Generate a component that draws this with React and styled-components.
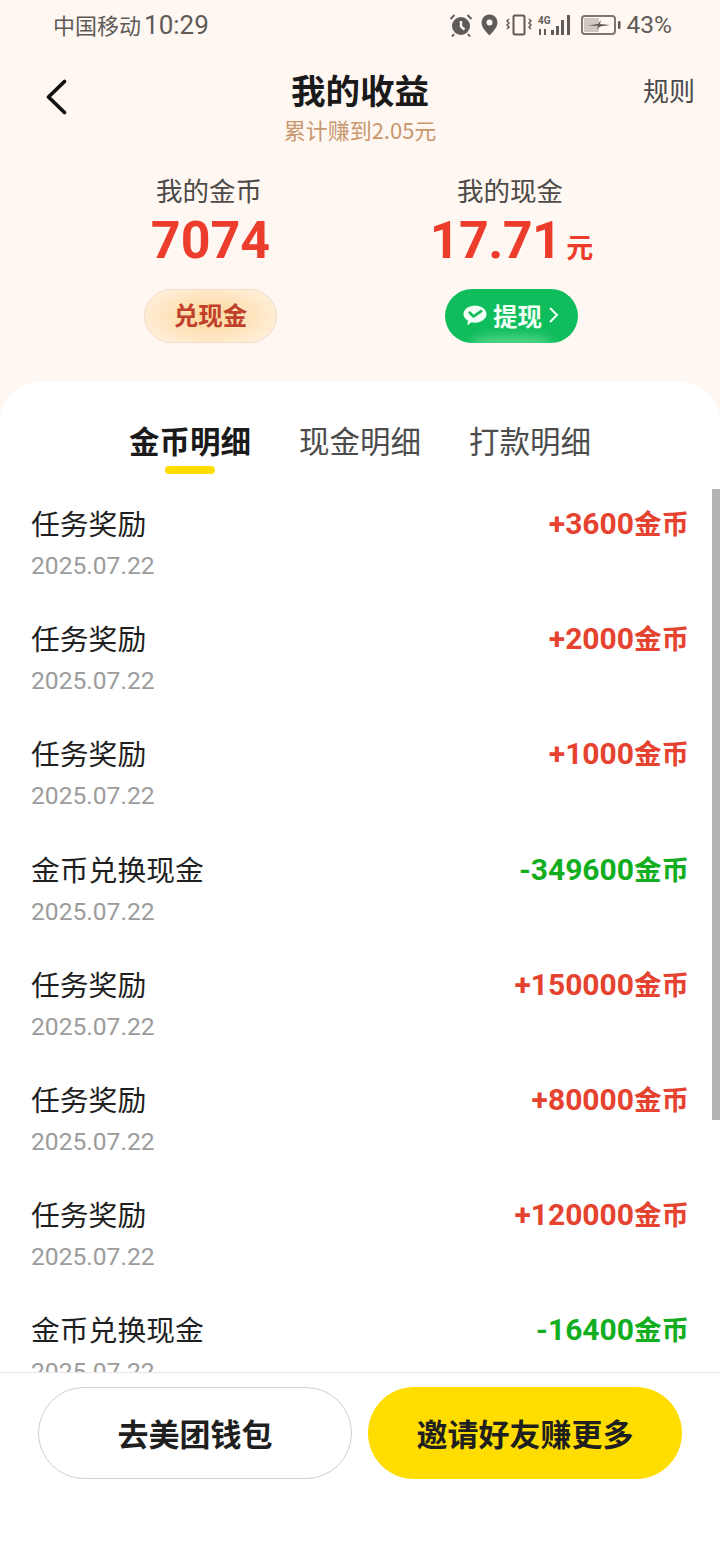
import React from "react";
import styled, { createGlobalStyle } from "styled-components";

const CJK = `"Noto Sans CJK SC", sans-serif`;
const NUM = `Roboto, "Noto Sans CJK SC", sans-serif`;

const Global = createGlobalStyle`
  html, body { margin: 0; padding: 0; background: #fff; }
  * { box-sizing: border-box; }
`;

const Page = styled.div`
  position: relative;
  width: 720px;
  height: 1560px;
  display: flex;
  flex-direction: column;
  overflow: hidden;
  background: #fff7f2;
  font-family: ${CJK};
`;

const StatusBar = styled.div`
  height: 50px;
  padding: 0 48px 0 53px;
  display: flex;
  align-items: center;
  justify-content: space-between;
  color: #5f5b58;
`;
const Carrier = styled.span`
  font-size: 22px;
  line-height: 30px;
  margin: 0 3px 3px 0;
`;
const Time = styled.span`
  font-family: ${NUM};
  font-size: 26px;
  line-height: 30px;
`;
const StatusLeft = styled.div`
  display: flex;
  align-items: center;
`;
const StatusRight = styled.div`
  display: flex;
  align-items: center;
`;
const Percent = styled.span`
  font-family: ${NUM};
  font-size: 24.5px;
  line-height: 30px;
  margin-left: 6px;
`;

const Nav = styled.div`
  display: grid;
  grid-template-columns: 1fr auto 1fr;
  padding: 16px 25px 0;
  height: 122px;
`;
const BackButton = styled.div`
  height: 48px;
  margin: 7px 0 0 20px;
  display: flex;
  align-items: center;
`;
const TitleBlock = styled.div`
  display: flex;
  flex-direction: column;
  align-items: center;
`;
const Title = styled.div`
  font-size: 34.5px;
  line-height: 46px;
  font-weight: 700;
  color: #1a1a1a;
`;
const Subtitle = styled.div`
  font-size: 22px;
  line-height: 30px;
  margin-top: 2px;
  color: #c9986f;
`;
const Rule = styled.div`
  justify-self: end;
  font-size: 26px;
  line-height: 46px;
  margin-top: 1px;
  color: #4a4a4a;
`;

const Stats = styled.div`
  display: grid;
  grid-template-columns: 301px 301px;
  padding-left: 60px;
  height: 210px;
`;
const Stat = styled.div`
  display: flex;
  flex-direction: column;
  align-items: center;
`;
const StatLabel = styled.div`
  font-size: 26.5px;
  line-height: 36px;
  margin-right: 3px;
  color: #4d4a48;
`;
const StatValue = styled.div`
  display: flex;
  align-items: baseline;
  height: 62px;
  margin-top: 2px;
  font-family: ${NUM};
  font-size: 52px;
  line-height: 62px;
  font-weight: 700;
  letter-spacing: ${(p) => (p.$tight ? "-0.6px" : "0")};
  color: #ec3c2c;
`;
const Unit = styled.span`
  font-family: ${CJK};
  font-size: 27px;
  font-weight: 700;
  letter-spacing: 0;
  margin-left: 5px;
`;
const Pill = styled.div`
  margin-top: 17px;
  width: 133px;
  height: 54px;
  border-radius: 27px;
  display: flex;
  align-items: center;
  justify-content: center;
  padding-bottom: 3px;
  font-size: 24.5px;
  font-weight: 700;
`;
const GoldPill = styled(Pill)`
  color: #c0402a;
  border: 1px solid #f1dcc8;
  background: radial-gradient(ellipse 60% 70% at 50% 50%, #fdd79d 0%, #fee6c2 60%, #fff1e1 100%);
`;
const GreenPill = styled(Pill)`
  position: relative;
  overflow: hidden;
  color: #f1fff6;
  gap: 6px;
  padding-bottom: 2px;
  background: #10bd5c;
  &::after {
    content: "";
    position: absolute;
    left: 25px;
    right: 25px;
    bottom: -8px;
    height: 16px;
    border-radius: 50%;
    background: rgba(150, 240, 180, 0.45);
    filter: blur(5px);
  }
`;

const Sheet = styled.div`
  flex: 1;
  min-height: 0;
  position: relative;
  display: flex;
  flex-direction: column;
  background: #fff;
  border-radius: 40px 40px 0 0;
`;
const Tabs = styled.div`
  display: flex;
  justify-content: center;
  gap: 48px;
  height: 107px;
  padding: 35px 0 0;
`;
const Tab = styled.div`
  position: relative;
  height: 46px;
  font-size: 30.5px;
  line-height: 46px;
  font-weight: ${(p) => (p.$active ? 700 : 400)};
  color: ${(p) => (p.$active ? "#1a1a1a" : "#4d4d4d")};
  ${(p) =>
    p.$active &&
    `&::after {
      content: "";
      position: absolute;
      left: 36px;
      bottom: -11px;
      width: 50px;
      height: 8px;
      border-radius: 4px;
      background: #ffdd00;
    }`}
`;
const List = styled.div`
  flex: 1;
  min-height: 0;
  overflow: hidden;
`;
const Scrollbar = styled.div`
  position: absolute;
  right: 0;
  top: 107px;
  width: 8px;
  height: 631px;
  background: #b4b4b4;
`;
const Row = styled.div`
  height: 115.2px;
  padding: 14px 31px 0 31px;
  display: flex;
  justify-content: space-between;
  align-items: flex-start;
`;
const RowMain = styled.div`
  display: flex;
  flex-direction: column;
`;
const RowTitle = styled.div`
  font-size: 28.8px;
  line-height: 40px;
  color: #1f1f1f;
`;
const RowDate = styled.div`
  font-family: ${NUM};
  font-size: 24.6px;
  line-height: 36px;
  margin: 5px 0 0 0;
  color: #9c9c9c;
`;
const Amount = styled.div`
  font-family: ${NUM};
  font-size: 30px;
  line-height: 40px;
  margin-top: -1px;
  font-weight: 700;
  color: ${(p) => (p.$negative ? "#12ae1f" : "#e5432f")};
`;
const AmountUnit = styled.span`
  font-family: ${CJK};
  font-size: 27.5px;
`;

const Footer = styled.div`
  height: 188px;
  flex: none;
  background: #fff;
  border-top: 1px solid #e6e6e6;
  padding: 14px 38px 0;
  display: flex;
  gap: 16px;
`;
const FooterButton = styled.div`
  flex: 0 0 314px;
  height: 92px;
  border-radius: 46px;
  display: flex;
  align-items: center;
  justify-content: center;
  padding-bottom: 2px;
  font-size: 31px;
  font-weight: 700;
  color: #1f1f1f;
  background: ${(p) => (p.$primary ? "#ffdd00" : "#fff")};
  border: ${(p) => (p.$primary ? "none" : "1px solid #d0d0d0")};
`;

const IconSlot = styled.svg`
  display: block;
  flex: none;
  margin-left: ${(p) => p.$gap || 0}px;
`;

const Alarm = () => (
  <IconSlot width="24" height="24" viewBox="0 0 24 24" fill="none">
    <circle cx="12" cy="13" r="9" fill="#5f5b58" />
    <path d="M12 8v5.500l3.500 3" stroke="#fff7f2" strokeWidth="2.400" />
    <path d="M1.500 6l4-4M22.500 6l-4-4M5 21l-2 2.500M19 21l2 2.500" stroke="#5f5b58" strokeWidth="2" />
  </IconSlot>
);
const Pin = () => (
  <IconSlot $gap={8} width="17" height="22" viewBox="0 0 17 22">
    <path d="M8.500 0.500a8 8 0 0 1 8 8c0 5-5 9.500-8 13-3-3.500-8-8-8-13a8 8 0 0 1 8-8z" fill="#5f5b58" />
    <circle cx="8.500" cy="8.500" r="3" fill="#fff7f2" />
  </IconSlot>
);
const Vibrate = () => (
  <IconSlot $gap={8} width="26" height="22" viewBox="0 0 26 22" fill="none" stroke="#5f5b58">
    <rect x="7.500" y="1.500" width="11" height="19" rx="1.500" strokeWidth="2" />
    <path d="M3 5l-2 2 2 2-2 2 2 2-2 2M23 5l2 2-2 2 2 2-2 2 2 2" strokeWidth="1.500" />
  </IconSlot>
);
const Signal = () => (
  <IconSlot $gap={6} width="34" height="22" viewBox="0 0 34 22" fill="#5f5b58">
    <rect x="13" y="16" width="3" height="5" />
    <rect x="18" y="12" width="3" height="9" />
    <rect x="23" y="6" width="3" height="15" />
    <rect x="29" y="1" width="3" height="20" />
    <rect x="1" y="15" width="2" height="6" />
    <rect x="6" y="15" width="2" height="6" />
    <text x="0" y="10" fontSize="10" fontFamily="Roboto, sans-serif" fontWeight="700">4G</text>
  </IconSlot>
);
const Battery = () => (
  <IconSlot $gap={9} width="40" height="20" viewBox="0 0 40 20" fill="none">
    <rect x="1" y="1" width="33" height="18" rx="3" stroke="#7b7672" strokeWidth="2" />
    <rect x="3" y="3" width="15" height="14" fill="#cfc8c2" />
    <path d="M7 10.500l10-1.500 3-4-1 4 10 1-10 1.500-3 3 1-3.500z" fill="#5f5b58" />
    <rect x="37" y="6" width="2.500" height="8" rx="1" fill="#5f5b58" />
  </IconSlot>
);
const BackIcon = () => (
  <IconSlot width="24" height="38" viewBox="0 0 24 38" fill="none">
    <path d="M19.500 3.500 3.500 19l16 15.500" stroke="#111" strokeWidth="3.800" strokeLinecap="round" strokeLinejoin="round" />
  </IconSlot>
);
const WechatPay = () => (
  <IconSlot width="24" height="23" viewBox="0 0 25 23">
    <path d="M12.500 1C19 1 24.500 5 24.500 10S19 19 12.500 19c-1.300 0-2.500-.2-3.700-.5L4.500 22l.6-5.200C2.200 15.200.5 12.800.5 10 .5 5 6 1 12.500 1z" fill="#f1fff6" />
    <path d="M7 8.500l4 4 8-5.500" stroke="#10bd5c" strokeWidth="2.800" fill="none" strokeLinecap="round" strokeLinejoin="round" />
  </IconSlot>
);
const Chevron = () => (
  <IconSlot width="12" height="20" viewBox="0 0 12 20" fill="none">
    <path d="M2 3l7 7-7 7" stroke="#f1fff6" strokeWidth="2" />
  </IconSlot>
);

const rows = [
  ["任务奖励", "+3600"],
  ["任务奖励", "+2000"],
  ["任务奖励", "+1000"],
  ["金币兑换现金", "-349600"],
  ["任务奖励", "+150000"],
  ["任务奖励", "+80000"],
  ["任务奖励", "+120000"],
  ["金币兑换现金", "-16400"],
];

export default function App() {
  return (
    <Page>
      <Global />
      <StatusBar>
        <StatusLeft>
          <Carrier>中国移动</Carrier>
          <Time>10:29</Time>
        </StatusLeft>
        <StatusRight>
          <Alarm />
          <Pin />
          <Vibrate />
          <Signal />
          <Battery />
          <Percent>43%</Percent>
        </StatusRight>
      </StatusBar>
      <Nav>
        <BackButton>
          <BackIcon />
        </BackButton>
        <TitleBlock>
          <Title>我的收益</Title>
          <Subtitle>累计赚到2.05元</Subtitle>
        </TitleBlock>
        <Rule>规则</Rule>
      </Nav>
      <Stats>
        <Stat>
          <StatLabel>我的金币</StatLabel>
          <StatValue>7074</StatValue>
          <GoldPill>兑现金</GoldPill>
        </Stat>
        <Stat>
          <StatLabel>我的现金</StatLabel>
          <StatValue $tight>
            17.71<Unit>元</Unit>
          </StatValue>
          <GreenPill>
            <WechatPay />
            提现
            <Chevron />
          </GreenPill>
        </Stat>
      </Stats>
      <Sheet>
        <Tabs>
          <Tab $active>金币明细</Tab>
          <Tab>现金明细</Tab>
          <Tab>打款明细</Tab>
        </Tabs>
        <List>
          {rows.map(([title, amount], i) => (
            <Row key={i}>
              <RowMain>
                <RowTitle>{title}</RowTitle>
                <RowDate>2025.07.22</RowDate>
              </RowMain>
              <Amount $negative={amount.startsWith("-")}>
                {amount}
                <AmountUnit>金币</AmountUnit>
              </Amount>
            </Row>
          ))}
        </List>
        <Scrollbar />
        <Footer>
          <FooterButton>去美团钱包</FooterButton>
          <FooterButton $primary>邀请好友赚更多</FooterButton>
        </Footer>
      </Sheet>
    </Page>
  );
}
